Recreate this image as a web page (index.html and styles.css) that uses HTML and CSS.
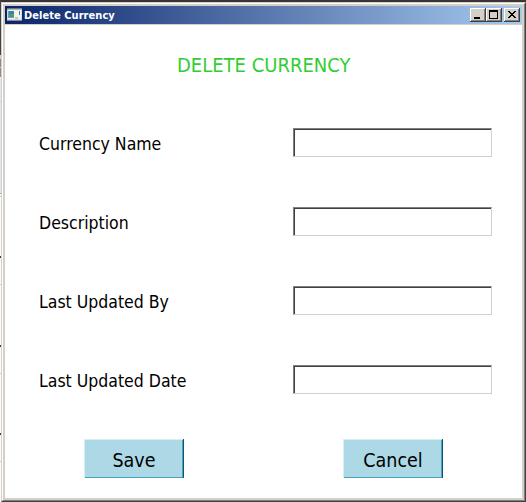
FILE: index.html
```
<!DOCTYPE html>
<html lang="en">
<head>
<meta charset="utf-8">
<title>Delete Currency</title>
<link rel="stylesheet" href="styles.css">
</head>
<body>
<div class="backdrop">
  <svg class="edge" width="1" height="502" shape-rendering="crispEdges">
    <path fill="#fdfdfd" d="M0 0h1v502H0z"/>
    <path fill="#424242" d="M0 0h1v55H0z"/>
    <path fill="#d4d0c8" d="M0 55h1v4H0z"/>
    <path fill="#8f8b89" d="M0 59h1v18H0z"/>
    <path fill="#dce8f6" d="M0 78h1v115H0z"/>
    <path fill="#9ca9b0" d="M0 193h1v1H0z"/>
    <path fill="#d4d0c8" d="M0 67h1v1H0zM0 101h1v1H0zM0 196h1v1H0zM0 284h1v1H0zM0 373h1v1H0zM0 461h1v1H0z"/>
    <path fill="#404040" d="M0 256h1v2H0zM0 345h1v2H0zM0 433h1v2H0z"/>
  </svg>
  <div class="window">
    <div class="frame">
      <header class="titlebar">
        <svg class="app-icon" width="15" height="14" shape-rendering="crispEdges">
          <path fill="#d5d8da" d="M0 0h15v13H0z"/>
          <path fill="#717b88" d="M0 0h15v1H0z"/>
          <path fill="#aeb4bb" d="M0 1h15v1H0z"/>
          <path fill="#f2f3f4" d="M1 2h13v9H1z"/>
          <path fill="#6f9db6" d="M1 3h6v7H1z"/>
          <path fill="#3d81a0" d="M2 3h5v3H2z"/>
          <path fill="#4e9b7a" d="M2 6h5v3H2z"/>
          <path fill="#c5c8c9" d="M8 9h3v2H8z"/>
          <path fill="#4b80ac" d="M12 3h1v2h-1z"/>
          <path fill="#438765" d="M12 5h1v2h-1z"/>
          <path fill="#858b90" d="M0 12h15v1H0z"/>
        </svg>
        <span class="caption">Delete Currency</span>
        <div class="controls">
          <button class="control" aria-label="Minimize"><svg width="16" height="14" shape-rendering="crispEdges"><path d="M4 9h6v2H4z"/></svg></button>
          <button class="control" aria-label="Maximize"><svg width="16" height="14" shape-rendering="crispEdges"><path fill-rule="evenodd" d="M3 2h9v9H3zM4 4v6h7V4z"/></svg></button>
          <button class="control close" aria-label="Close"><svg width="16" height="14" shape-rendering="crispEdges"><path d="M4 3h2v1H4zM10 3h2v1h-2zM5 4h2v1H5zM9 4h2v1H9zM6 5h4v1H6zM7 6h2v1H7zM6 7h4v1H6zM5 8h2v1H5zM9 8h2v1H9zM4 9h2v1H4zM10 9h2v1h-2z"/></svg></button>
        </div>
      </header>
      <main class="client">
        <h1 class="heading">DELETE CURRENCY</h1>
        <form class="form">
          <label class="row"><span class="label">Currency Name</span><input class="field" type="text"></label>
          <label class="row"><span class="label">Description</span><input class="field" type="text"></label>
          <label class="row"><span class="label">Last Updated By</span><input class="field" type="text"></label>
          <label class="row"><span class="label">Last Updated Date</span><input class="field" type="text"></label>
          <div class="actions">
            <button class="action" type="button">Save</button>
            <button class="action" type="button">Cancel</button>
          </div>
        </form>
      </main>
    </div>
  </div>
</div>
</body>
</html>
```
FILE: styles.css
```
* { box-sizing: border-box; }
body {
  margin: 0;
  overflow: hidden;
  font-family: "DejaVu Sans Condensed", "DejaVu Sans", sans-serif;
  font-stretch: condensed;
  color: #000;
}
.backdrop {
  display: flex;
  width: 526px;
  height: 502px;
  background: #393536;
}
.edge { display: block; flex: none; }
.window {
  width: 525px;
  height: 500px;
  margin-top: 2px;
  border: 1px solid;
  border-color: #d4d0c8 #404040 #404040 #d4d0c8;
}
.frame {
  height: 498px;
  padding: 2px;
  background: #d4d0c8;
  border: 1px solid;
  border-color: #fff #808080 #808080 #fff;
}
.titlebar {
  display: flex;
  height: 18px;
  margin-bottom: 1px;
  padding: 2px;
  background: linear-gradient(90deg, #0a246a, #a6caf0);
}
.app-icon { display: block; flex: none; }
.caption {
  margin-left: 2px;
  color: #fff;
  font-size: 11px;
  font-weight: bold;
  line-height: 15px;
  letter-spacing: 0.05px;
  white-space: nowrap;
}
.controls { display: flex; margin-left: auto; }
.control {
  width: 16px;
  height: 14px;
  padding: 0;
  border: 0;
  background: #d4d0c8;
  box-shadow: inset -1px -1px #404040, inset 1px 1px #fff, inset -2px -2px #808080;
}
.control svg { display: block; }
.close { margin-left: 2px; }
.client {
  height: 473px;
  padding: 26px 30px 0 34px;
  background: #fff;
}
.heading {
  margin: 0 0 49px;
  padding-left: 138px;
  color: #32cd32;
  font-size: 20px;
  font-weight: normal;
  line-height: 28px;
  letter-spacing: 0;
  white-space: nowrap;
}
.form { display: grid; row-gap: 50px; }
.row {
  display: flex;
  justify-content: space-between;
  height: 29px;
}
.label {
  font-size: 17.5px;
  line-height: 33px;
  white-space: nowrap;
}
.field {
  width: 199px;
  height: 29px;
  padding: 2px;
  border: 1px solid;
  border-color: #808080 #d4d0c8 #d4d0c8 #808080;
  box-shadow: inset 1px 1px #404040;
  background: #fff;
  outline: 0;
}
.actions {
  display: flex;
  gap: 159px;
  margin: -5px 0 0 45px;
}
.action {
  width: 100px;
  height: 39px;
  padding: 4px 0 0;
  border: 0;
  background: #add8e6;
  box-shadow: inset -1px 0 #17536a, inset 1px 1px #d8eef5, inset -2px -1px #42a4c2;
  font-family: inherit;
  font-stretch: inherit;
  font-size: 19.5px;
}
```
